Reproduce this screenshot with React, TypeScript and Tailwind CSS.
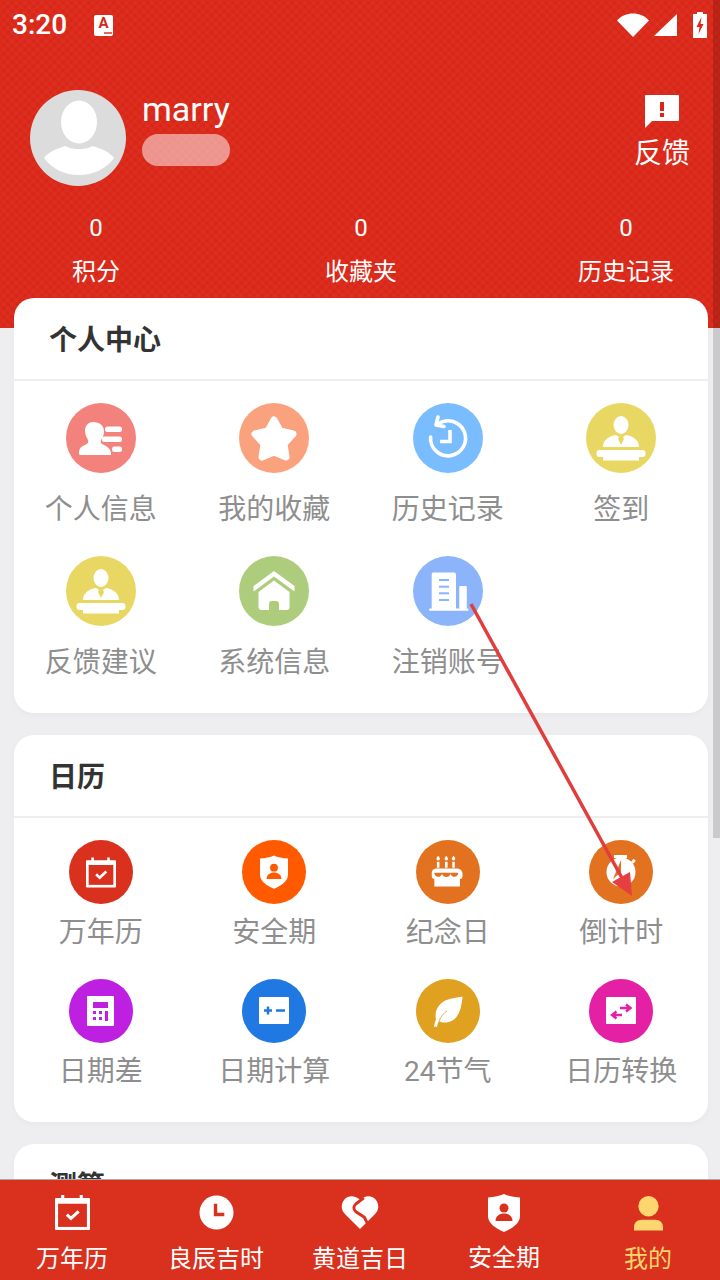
import type { ReactNode } from 'react';

const WHITE = '#ffffff';

function PersonListIcon() {
  return (
    <svg viewBox="0 0 70 70" className="w-full h-full" fill={WHITE}>
      <path d="M27 19c-5 0-8 4-8 9 0 4 2 7 3 9 1 3-1 4-3 5-3 1-6 3-6 8 0 2 1 2 2 2h30v-1c0-5-3-7-7-9-2-1-4-2-3-5 2-2 3-5 3-9 0-5-4-9-11-9z" />
      <rect x="39" y="23.5" width="17" height="5.5" rx="2.5" />
      <rect x="36" y="33.5" width="20" height="5.5" rx="2.5" />
      <rect x="46" y="43.5" width="10" height="5.5" rx="2.5" />
    </svg>
  );
}

function StarIcon() {
  return (
    <svg viewBox="0 0 70 70" className="w-full h-full" fill={WHITE} stroke={WHITE} strokeWidth="7" strokeLinejoin="round">
      <path d="M35 17l6 11 13 3-9 10 2 13-12-5-12 5 2-13-9-10 13-3z" />
    </svg>
  );
}

function HistoryIcon() {
  return (
    <svg viewBox="0 0 70 70" className="w-full h-full" fill="none" stroke={WHITE} strokeWidth="3.6">
      <path d="M25 21a17.5 17.5 0 1 1-7.4 13" strokeLinecap="round" />
      <path d="M37 27v11.5H27" />
      <path d="M25 14l-2 8 8 1.5" strokeLinecap="round" strokeLinejoin="round" />
    </svg>
  );
}

function PodiumIcon() {
  return (
    <svg viewBox="0 0 70 70" className="w-full h-full" fill={WHITE}>
      <ellipse cx="35" cy="22" rx="7.5" ry="9" />
      <path d="M17 44c0-7 6-11 13-12l3 2-1 2 3 6 3-6-1-2 3-2c7 1 13 5 13 12z" />
      <rect x="10.5" y="47" width="49" height="7" rx="3" />
      <rect x="17" y="54" width="36" height="3.5" />
    </svg>
  );
}

function HomeIcon({ color }: { color: string }) {
  return (
    <svg viewBox="0 0 70 70" className="w-full h-full" fill={WHITE}>
      <path d="M35 15L14.500 30v5.500L35 20.500l20.500 15V30z" />
      <path d="M35 24.500L19.500 36v15c0 2 1 3 3 3h25c2 0 3-1 3-3V36z" />
      <path d="M30 54v-6c0-2 1-3 3-3h4c2 0 3 1 3 3v6z" fill={color} />
    </svg>
  );
}

function BuildingIcon({ color }: { color: string }) {
  return (
    <svg viewBox="0 0 70 70" className="w-full h-full" fill={WHITE}>
      <path d="M20 16.500h21a2 2 0 0 1 2 2V53H18.700V18a2 2 0 0 1 1.300-1.500z" />
      <rect x="46.300" y="30" width="7.500" height="23" rx="1" />
      <rect x="16" y="52.500" width="39.500" height="2.300" rx="1" />
      <g fill={color}>
        <rect x="26" y="23" width="10" height="2" />
        <rect x="26" y="29.700" width="10" height="2" />
        <rect x="26" y="36.300" width="10" height="2" />
        <rect x="26" y="43" width="10" height="2" />
      </g>
    </svg>
  );
}

function CalendarCheck({ color }: { color: string }) {
  return (
    <svg viewBox="0 0 34 34" className="w-full h-full">
      <rect x="6" y="0" width="3" height="5" fill={WHITE} />
      <rect x="24" y="0" width="3" height="5" fill={WHITE} />
      <rect x="0" y="3" width="34" height="31" rx="1" fill={WHITE} />
      <rect x="3" y="8.500" width="28" height="22.500" fill={color} />
      <path d="M11.500 19l4 3.800 7.500-7" fill="none" stroke={WHITE} strokeWidth="3" />
    </svg>
  );
}

function ShieldPerson({ color }: { color: string }) {
  return (
    <svg viewBox="0 0 32 38" className="w-full h-full">
      <path d="M16 0c4 2 10 3 16 3.500V22c0 7-7 12-16 16C7 34 0 29 0 22V3.500C6 3 12 2 16 0z" fill={WHITE} />
      <circle cx="16" cy="14" r="4.500" fill={color} />
      <path d="M7.500 27c0-5 4-7.500 8.500-7.500s8.500 2.500 8.500 7.500z" fill={color} />
    </svg>
  );
}

function CakeIcon({ color }: { color: string }) {
  return (
    <svg viewBox="-3.500 -2.500 75 75" className="w-full h-full" fill={WHITE}>
      <path d="M22.500 16c1.500 1.500 2 2.500 2 3.500a2 2 0 0 1-4 0c0-1 .5-2 2-3.500zM32 16c1.500 1.500 2 2.500 2 3.500a2 2 0 0 1-4 0c0-1 .5-2 2-3.500zM40.500 16c1.500 1.500 2 2.500 2 3.500a2 2 0 0 1-4 0c0-1 .5-2 2-3.500z" />
      <rect x="21" y="23" width="3" height="7" />
      <rect x="30.500" y="23" width="3" height="7" />
      <rect x="39" y="23" width="3" height="7" />
      <path d="M20 31h25a6 6 0 0 1 6 6v3a3 3 0 0 1-3 3v9H18V43a3 3 0 0 1-3-3v-3a5 5 0 0 1 5-6z" />
      <path d="M18 36c0 6 8 6 9 1 1 5 9 5 10 0 1 5 9 5 9-1z" fill={color} />
    </svg>
  );
}

function StopwatchIcon({ color }: { color: string }) {
  return (
    <svg viewBox="0 0 64 64" className="w-full h-full" fill={WHITE}>
      <rect x="25" y="15" width="13" height="3" />
      <circle cx="32" cy="32" r="14.500" />
      <path d="M32 20v12l-8 7z" fill={color} />
      <rect x="43" y="19" width="3" height="4" transform="rotate(40 44 21)" />
    </svg>
  );
}

function CalculatorIcon({ color }: { color: string }) {
  return (
    <svg viewBox="0 0 64 64" className="w-full h-full">
      <rect x="18" y="17" width="27" height="30" rx="1" fill={WHITE} />
      <g fill={color}>
        <rect x="24" y="23" width="15" height="6" />
        <rect x="24" y="32" width="3" height="3" />
        <rect x="30" y="32" width="3" height="3" />
        <rect x="36" y="32" width="3" height="10" />
        <rect x="24" y="38" width="3" height="3" />
        <rect x="30" y="38" width="3" height="3" />
      </g>
    </svg>
  );
}

function PlusMinusIcon({ color }: { color: string }) {
  return (
    <svg viewBox="0 0 64 64" className="w-full h-full">
      <rect x="17" y="18" width="30" height="27" rx="1" fill={WHITE} />
      <path d="M22 31.500h8M26 27.500v8M34 31.500h9" stroke={color} strokeWidth="2.500" fill="none" />
    </svg>
  );
}

function LeafIcon({ color }: { color: string }) {
  return (
    <svg viewBox="0 0 64 64" className="w-full h-full">
      <path d="M46.500 17.500c-1 12-4 26-18 26-2 0-4-.5-5.500-1.500-1 1.500-1.500 3.500-2 6l-3-.5c.5-3 1-5 2-7-2-9 3-17 12-20 5-1.500 10-2 14.500-3z" fill={WHITE} />
      <path d="M23 42c2-5 5-8 8-10" stroke={color} strokeWidth="0.800" fill="none" />
    </svg>
  );
}

function SwapIcon({ color }: { color: string }) {
  return (
    <svg viewBox="0 0 64 64" className="w-full h-full">
      <rect x="17" y="18" width="30" height="27" rx="1" fill={WHITE} />
      <path d="M31 29h10M37 25.500l4.500 3.500-4.500 3.500" stroke={color} strokeWidth="2.400" fill="none" />
      <path d="M33 36H24M27.500 32.500L23 36l4.500 3.500" stroke={color} strokeWidth="2.400" fill="none" />
    </svg>
  );
}

function ClockIcon({ color }: { color: string }) {
  return (
    <svg viewBox="0 0 36 36" className="w-full h-full">
      <circle cx="18" cy="18" r="17.500" fill={WHITE} />
      <path d="M17 9v11h9" stroke={color} strokeWidth="3.500" fill="none" />
    </svg>
  );
}

function HeartIcon({ color }: { color: string }) {
  return (
    <svg viewBox="0 0 38 36" className="w-full h-full">
      <path d="M19 35L3.500 19.500C-1 15-.5 8.500 3 4.500c4-4.500 11-4.500 16 .5 5-5 12-5 16-.5 3.500 4 4 10.500-.5 15z" fill={WHITE} />
      <path d="M23 3l-8 6c-3 2.500-3 5.500-.5 8l9 6 3 6" stroke={color} strokeWidth="3" fill="none" />
    </svg>
  );
}

function UserIcon() {
  return (
    <svg viewBox="0 0 30 36" className="w-full h-full" fill="#fdd66f">
      <circle cx="15" cy="11" r="10.500" />
      <path d="M0 36v-3c0-5 3-8 8-8h14c5 0 8 3 8 8v3z" />
    </svg>
  );
}

interface Entry {
  label: string;
  color: string;
  icon: ReactNode;
}

const personal: Entry[] = [
  { label: '个人信息', color: 'bg-[#f2827b]', icon: <PersonListIcon /> },
  { label: '我的收藏', color: 'bg-[#faa27e]', icon: <StarIcon /> },
  { label: '历史记录', color: 'bg-[#79bdfe]', icon: <HistoryIcon /> },
  { label: '签到', color: 'bg-[#e9d763]', icon: <PodiumIcon /> },
  { label: '反馈建议', color: 'bg-[#e9d763]', icon: <PodiumIcon /> },
  { label: '系统信息', color: 'bg-[#aecd7c]', icon: <HomeIcon color="#aecd7c" /> },
  { label: '注销账号', color: 'bg-[#8cb4fa]', icon: <BuildingIcon color="#8cb4fa" /> },
];

const calendar: Entry[] = [
  {
    label: '万年历',
    color: 'bg-[#da301e]',
    icon: (
      <div className="w-[30px] h-[31px]">
        <CalendarCheck color="#da301e" />
      </div>
    ),
  },
  {
    label: '安全期',
    color: 'bg-[#ff5a00]',
    icon: (
      <div className="w-[28px] h-[34px]">
        <ShieldPerson color="#ff5a00" />
      </div>
    ),
  },
  { label: '纪念日', color: 'bg-[#e27220]', icon: <CakeIcon color="#e27220" /> },
  { label: '倒计时', color: 'bg-[#e27220]', icon: <StopwatchIcon color="#e27220" /> },
  { label: '日期差', color: 'bg-[#bd20e0]', icon: <CalculatorIcon color="#bd20e0" /> },
  { label: '日期计算', color: 'bg-[#2078e2]', icon: <PlusMinusIcon color="#2078e2" /> },
  { label: '24节气', color: 'bg-[#e0a020]', icon: <LeafIcon color="#e0a020" /> },
  { label: '日历转换', color: 'bg-[#e420a4]', icon: <SwapIcon color="#e420a4" /> },
];

function Card({ title, children }: { title: string; children?: ReactNode }) {
  return (
    <section className="bg-white rounded-[20px] shadow-[0_2px_6px_rgba(0,0,0,0.03)]">
      <h2 className="h-[83px] pt-[4px] pl-[35px] flex items-center text-[28px] font-bold text-[#333333] border-b-2 border-[#eeeeee]">
        {title}
      </h2>
      {children}
    </section>
  );
}

export default function App() {
  return (
    <div className="relative h-[1280px] w-[720px] overflow-hidden flex flex-col bg-[#eeeef0] font-['Roboto','Noto_Sans_CJK_SC',sans-serif]">
      <main className="flex-1 overflow-hidden">
        {/* Header */}
        <header className="h-[328px] text-white bg-[#d92617] bg-[repeating-linear-gradient(45deg,rgba(255,255,255,0.025)_0,rgba(255,255,255,0.025)_3px,transparent_3px,transparent_6px),repeating-linear-gradient(-45deg,rgba(255,255,255,0.025)_0,rgba(255,255,255,0.025)_3px,transparent_3px,transparent_6px)]">
          <div className="h-[50px] pl-[12px] pr-[13px] flex items-center">
            <span className="text-[28px] font-medium leading-none">3:20</span>
            <span className="relative ml-[27px] w-[19px] h-[21px] rounded-[2px] bg-white text-[#d92617] flex items-start justify-center text-[15px] font-bold leading-[17px]">
              A
              <span className="absolute right-[1px] bottom-[2px] w-[8px] h-[2px] bg-[#d92617]/70" />
            </span>
            <div className="ml-auto flex items-center">
              <svg viewBox="0 0 32 24" className="w-[32px] h-[24px]" fill={WHITE}>
                <path d="M0 7.500C4 3 10 .500 16 .500S28 3 32 7.500L16 24z" />
              </svg>
              <svg viewBox="0 0 23 22" className="ml-[5px] w-[23px] h-[22px]" fill={WHITE}>
                <path d="M23 0v22H0z" />
              </svg>
              <svg viewBox="0 0 14 26" className="ml-[16px] w-[14px] h-[26px]">
                <path d="M4 0h6v2h4v24H0V2h4z" fill={WHITE} />
                <path d="M8.500 5L3.500 15h3l-1 7 5-10h-3z" fill="#d92617" />
              </svg>
            </div>
          </div>

          <div className="mt-[40px] pl-[30px] pr-[30px] flex">
            <div className="w-[96px] h-[96px] rounded-full bg-[#dcdcdc] overflow-hidden shrink-0">
              <svg viewBox="0 0 96 96" className="w-full h-full" fill={WHITE}>
                <ellipse cx="49" cy="32" rx="18" ry="21.500" />
                <path d="M14 68c4-6 14-10 22-12 3 4 23 4 26 0 8 2 18 6 22 12-8 11-21 17-35 17S22 79 14 68z" />
              </svg>
            </div>
            <div className="ml-[16px] mt-[-1px]">
              <div className="text-[34px] leading-[40px]">marry</div>
              <div className="mt-[5px] w-[88px] h-[32px] rounded-full bg-white/50" />
            </div>
            <div className="ml-auto pt-[5px] flex flex-col items-center">
              <svg viewBox="0 0 34 33" className="w-[34px] h-[33px]" fill={WHITE}>
                <path d="M1 0h32a1 1 0 0 1 1 1v24a1 1 0 0 1-1 1H7l-7 7V1a1 1 0 0 1 1-1z" />
                <rect x="15" y="7" width="4" height="9" fill="#d92617" />
                <rect x="15" y="18" width="4" height="4" fill="#d92617" />
              </svg>
              <span className="mt-[5px] text-[28px] leading-[42px]">反馈</span>
            </div>
          </div>

          <div className="mt-[24px] pl-[48px] pr-[46px] flex justify-between">
            {[
              ['0', '积分'],
              ['0', '收藏夹'],
              ['0', '历史记录'],
            ].map(([count, name]) => (
              <div key={name} className="w-[96px] flex flex-col items-center text-[24px] leading-[36px]">
                <span>{count}</span>
                <span className="mt-[8px] whitespace-nowrap">{name}</span>
              </div>
            ))}
          </div>
        </header>

        {/* Cards */}
        <div className="mt-[-30px] mr-[12px] ml-[14px] flex flex-col gap-[22px]">
          <Card title="个人中心">
            <div className="grid grid-cols-4 pt-[22px] pb-[29px] gap-y-[25px]">
              {personal.map((item) => (
                <div key={item.label} className="flex flex-col items-center">
                  <div className={`w-[70px] h-[70px] rounded-full ${item.color}`}>{item.icon}</div>
                  <span className="mt-[16px] h-[42px] text-[28px] leading-[42px] text-[#8e8e8e] whitespace-nowrap">
                    {item.label}
                  </span>
                </div>
              ))}
            </div>
          </Card>
          <Card title="日历">
            <div className="grid grid-cols-4 pt-[22px] pb-[29px] gap-y-[25px]">
              {calendar.map((item) => (
                <div key={item.label} className="flex flex-col items-center">
                  <div className={`w-[64px] h-[64px] rounded-full flex items-center justify-center ${item.color}`}>
                    {item.icon}
                  </div>
                  <span className="mt-[8px] h-[42px] text-[28px] leading-[42px] text-[#8e8e8e] whitespace-nowrap">
                    {item.label}
                  </span>
                </div>
              ))}
            </div>
          </Card>
          <Card title="测算" />
        </div>
      </main>

      {/* Tab bar */}
      <nav className="h-[101px] shrink-0 grid grid-cols-5 bg-[#da301e] border-t border-[#a8a8a8] text-white text-[24px] leading-[36px] relative">
        <div className="flex flex-col items-center pt-[15px]">
          <div className="w-[35px] h-[35px]">
            <CalendarCheck color="#da301e" />
          </div>
          <span className="mt-[11px]">万年历</span>
        </div>
        <div className="flex flex-col items-center pt-[15px]">
          <div className="w-[35px] h-[35px]">
            <ClockIcon color="#da301e" />
          </div>
          <span className="mt-[11px]">良辰吉时</span>
        </div>
        <div className="flex flex-col items-center pt-[15px]">
          <div className="w-[38px] h-[35px]">
            <HeartIcon color="#da301e" />
          </div>
          <span className="mt-[11px]">黄道吉日</span>
        </div>
        <div className="flex flex-col items-center pt-[14px]">
          <div className="w-[32px] h-[38px]">
            <ShieldPerson color="#da301e" />
          </div>
          <span className="mt-[8px]">安全期</span>
        </div>
        <div className="flex flex-col items-center pt-[15px] text-[#fdd66f]">
          <div className="w-[29px] h-[36px]">
            <UserIcon />
          </div>
          <span className="mt-[10px]">我的</span>
        </div>
      </nav>

      {/* Scrollbar thumb */}
      <div className="absolute top-0 right-0 w-[7px] h-[838px] bg-black/15" />

      {/* Annotation arrow drawn over the page */}
      <svg viewBox="0 0 720 1280" className="absolute inset-0 w-[720px] h-[1280px] pointer-events-none">
        <path d="M471 604L622 878" stroke="#e23d3d" strokeWidth="3.500" fill="none" />
        <path d="M632 896L612 882L630 872z" fill="#e53f42" />
      </svg>
    </div>
  );
}
